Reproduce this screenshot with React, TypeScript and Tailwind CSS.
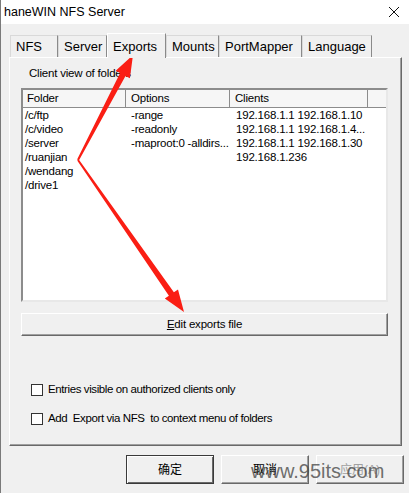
import React from "react";

const rows = [
  { folder: "/c/ftp", options: "-range", clients: "192.168.1.1 192.168.1.10" },
  { folder: "/c/video", options: "-readonly", clients: "192.168.1.1 192.168.1.4..." },
  { folder: "/server", options: "-maproot:0 -alldirs...", clients: "192.168.1.1 192.168.1.30" },
  { folder: "/ruanjian", options: "", clients: "192.168.1.236" },
  { folder: "/wendang", options: "", clients: "" },
  { folder: "/drive1", options: "", clients: "" },
];

const tabs = [
  { label: "NFS", w: "w-[48px]" },
  { label: "Server", w: "w-[49px]" },
  { label: "Exports", w: "w-[59px]", active: true },
  { label: "Mounts", w: "w-[53px]" },
  { label: "PortMapper", w: "w-[83px]" },
  { label: "Language", w: "w-[70px]" },
];

function Checkbox({ label }: { label: string }) {
  return (
    <div className="flex items-center gap-[5px] ml-[21px] h-[13px]">
      <div className="w-[12px] h-[12px] bg-white border border-[#333]" />
      <span className="text-[11.5px] tracking-[-0.4px] leading-[13px] whitespace-pre">{label}</span>
    </div>
  );
}

export default function App() {
  return (
    <div className="relative w-[409px] h-[493px] overflow-hidden bg-[#f0f0f0] text-black font-['Liberation_Sans','Noto_Sans_CJK_SC',sans-serif] border-l border-[#7a7a7a]">
      {/* title bar */}
      <div className="h-[24px] bg-white flex items-center justify-between pl-[3px] pr-[9px]">
        <span className="text-[12.5px]">haneWIN NFS Server</span>
        <svg width="12" height="12" viewBox="0 0 12 12">
          <path d="M1 1 L11 11 M11 1 L1 11" stroke="#111" strokeWidth="1" />
        </svg>
      </div>

      {/* tabs */}
      <div className="flex items-end h-[24px] mt-[9px] pl-[9px]">
        {tabs.map((t) =>
          t.active ? (
            <div
              key={t.label}
              className={`${t.w} h-[25px] -mb-px relative z-10 bg-[#f0f0f0] border-t border-l border-white border-r border-r-[#8a8a8a] flex items-start pt-[3px] pl-[5px] text-[13px]`}
            >
              {t.label}
            </div>
          ) : (
            <div
              key={t.label}
              className={`${t.w} h-[22px] bg-[#f0f0f0] border-t border-l border-[#d9d9d9] border-r border-r-[#8a8a8a] flex items-center pl-[5px] text-[13px]`}
            >
              {t.label}
            </div>
          )
        )}
      </div>

      {/* panel */}
      <div className="ml-[8px] w-[393px] h-[389px] border-t border-l border-white border-r border-b border-r-[#696969] border-b-[#696969] shadow-[inset_-1px_-1px_0_#a0a0a0] flex flex-col">
        <div className="pl-[19px] pt-[8px] text-[11.5px] tracking-[-0.2px] leading-[14px]">Client view of folders</div>

        {/* list view */}
        <div className="ml-[11px] mt-[8px] w-[367px] h-[214px] bg-white border-2 border-t-[#8c8c8c] border-l-[#8c8c8c] border-r-[#e8e8e8] border-b-[#e8e8e8] flex flex-col text-[11.5px] tracking-[-0.2px]">
          <div className="grid grid-cols-[103px_104px_138px_1fr] h-[18px] bg-[#f6f6f6] border-b border-[#8c8c8c]">
            <div className="border-r border-[#8c8c8c] pl-[4px] flex items-center">Folder</div>
            <div className="border-r border-[#8c8c8c] pl-[5px] flex items-center">Options</div>
            <div className="border-r border-[#8c8c8c] pl-[5px] flex items-center">Clients</div>
            <div />
          </div>
          {rows.map((r) => (
            <div key={r.folder} className="grid grid-cols-[103px_104px_138px_1fr] h-[14px] leading-[14px]">
              <div className="pl-[2px]">{r.folder}</div>
              <div className="pl-[5px] whitespace-nowrap">{r.options}</div>
              <div className="pl-[6px] whitespace-nowrap">{r.clients}</div>
              <div />
            </div>
          ))}
        </div>

        <button
          type="button"
          className="ml-[11px] mt-[11px] w-[367px] h-[23px] bg-[#f0f0f0] border border-t-white border-l-white border-r-[#696969] border-b-[#696969] shadow-[inset_-1px_-1px_0_#a0a0a0] text-[11.5px] tracking-[-0.2px] flex items-center justify-center"
        >
          <span>
            <span className="underline">E</span>dit exports file
          </span>
        </button>

        <div className="mt-[47px] flex flex-col gap-[16px]">
          <Checkbox label="Entries visible on authorized clients only" />
          <Checkbox label="Add  Export via NFS  to context menu of folders" />
        </div>
      </div>

      {/* dialog buttons */}
      <div className="flex gap-[7px] pl-[125px] mt-[9px]">
        <button
          type="button"
          className="w-[88px] h-[29px] bg-[#f0f0f0] border border-[#3a3a3a] shadow-[inset_1px_1px_0_#ffffff,inset_-1px_-1px_0_#696969] text-[12px] flex items-center justify-center"
        >
          确定
        </button>
        <button
          type="button"
          className="w-[88px] h-[29px] bg-[#f0f0f0] border border-t-white border-l-white border-r-[#696969] border-b-[#696969] shadow-[inset_-1px_-1px_0_#a0a0a0] text-[12px] flex items-center justify-center"
        >
          取消
        </button>
        <button
          type="button"
          className="w-[88px] h-[29px] bg-[#f0f0f0] border border-t-white border-l-white border-r-[#696969] border-b-[#696969] shadow-[inset_-1px_-1px_0_#a0a0a0] text-[12px] text-[#a0a0a0] flex items-center justify-center"
        >
          应用(A)
        </button>
      </div>

      {/* watermark */}
      <div className="absolute left-[250px] top-[457px] text-[20px] leading-[28px] text-[#4a4a4a]/80 pointer-events-none">
        www.95its.com
      </div>

      {/* red annotation arrows */}
      <svg className="absolute left-0 top-0 pointer-events-none" width="409" height="493" viewBox="0 0 409 493">
        <polygon
          fill="#fa1e14"
          points="76.1,159.5 119.1,73.1 114.7,70.8 132,55 128.9,78.2 124.5,75.9 77.9,160.5"
        />
        <polygon
          fill="#fa1e14"
          points="77.8,159.4 172.9,292.3 177,289.4 183,312 163.8,298.6 167.9,295.7 76.2,160.6"
        />
      </svg>
    </div>
  );
}
